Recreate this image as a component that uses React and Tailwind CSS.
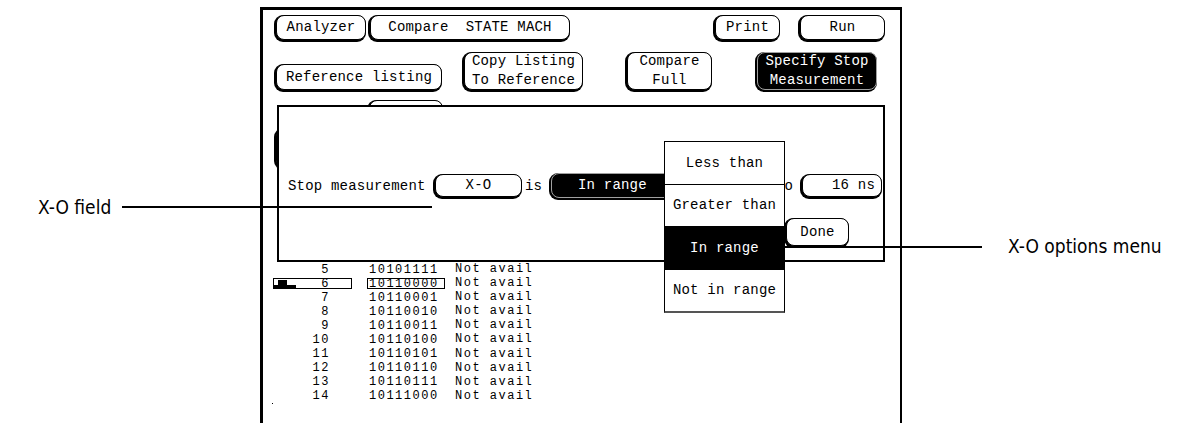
import React from "react";

function Btn({ box, dark, children, inner = "" }) {
  return (
    <div className={`${box} shrink-0 rounded-[9px] bg-black pl-[2px] pb-[2px]`}>
      <div
        className={`h-full w-full rounded-[8px] border flex flex-col items-center justify-center leading-[19px] ${
          dark ? "bg-black border-[#a0a0a0] text-white" : "bg-white border-black text-black"
        } ${inner}`}
      >
        {children}
      </div>
    </div>
  );
}

const rows = [
  ["5", "10101111"],
  ["6", "10110000"],
  ["7", "10110001"],
  ["8", "10110010"],
  ["9", "10110011"],
  ["10", "10110100"],
  ["11", "10110101"],
  ["12", "10110110"],
  ["13", "10110111"],
  ["14", "10111000"],
];

export default function App() {
  return (
    <div className="relative w-[1186px] h-[423px] overflow-hidden bg-white flex text-black">
      {/* left annotation column */}
      <div
        className="w-[260px] shrink-0 pt-[195px] pl-[38px] text-[19px] leading-[24px]"
        style={{ fontFamily: '"Liberation Sans Narrow", "DejaVu Sans Condensed", "Liberation Sans", sans-serif' }}
      >
        X-O field
      </div>

      {/* instrument screen */}
      <div
        className="w-[642px] h-[440px] shrink-0 mt-[7px] border-l-[3px] border-t-[3px] border-r-[2px] border-black flex flex-col text-[14px] tracking-[0.2px]"
        style={{ fontFamily: '"Liberation Mono", "DejaVu Sans Mono", monospace' }}
      >
        {/* row 1 */}
        <div className="flex mt-[5px] h-[27px]">
          <Btn box="ml-[11px] w-[92px] h-[27px]">Analyzer</Btn>
          <Btn box="ml-[2px] w-[202px] h-[27px]">
            <span className="whitespace-pre">Compare  STATE MACH</span>
          </Btn>
          <Btn box="ml-[143px] w-[67px] h-[27px]">Print</Btn>
          <Btn box="ml-[18px] w-[87px] h-[27px]">Run</Btn>
        </div>

        {/* row 2 */}
        <div className="flex items-end mt-[10px] h-[40px]">
          <Btn box="ml-[11px] w-[168px] h-[28px]">Reference listing</Btn>
          <Btn box="ml-[20px] w-[121px] h-[40px]">
            <span>Copy Listing</span>
            <span>To Reference</span>
          </Btn>
          <Btn box="ml-[42px] w-[87px] h-[40px]">
            <span>Compare</span>
            <span>Full</span>
          </Btn>
          <Btn box="ml-[43px] w-[122px] h-[40px]" dark>
            <span>Specify Stop</span>
            <span>Measurement</span>
          </Btn>
        </div>

        {/* rows hidden behind the dialog */}
        <div className="flex mt-[8px] h-[27px]">
          <Btn box="ml-[104px] w-[76px] h-[27px]"> </Btn>
        </div>
        <div className="flex mt-[1px] h-[42px]">
          <Btn box="ml-[11px] w-[150px] h-[42px]"> </Btn>
        </div>

        {/* listing */}
        <div className="mt-[92px] flex flex-col text-[12px] tracking-[1.5px]">
          {rows.map(([n, b]) => {
            const hl = n === "6";
            return (
              <div key={n} className="flex h-[14.1px] leading-[14.1px]">
                <div
                  className={`relative ml-[10px] w-[79px] h-[11px] mt-[1.5px] leading-[11px] text-right pr-[21px] ${
                    hl ? "border border-black" : "border border-transparent"
                  }`}
                >
                  {hl && (
                    <svg className="absolute left-[-1px] top-[0px]" width="23" height="9" viewBox="0 0 23 9">
                      <rect x="0" y="6" width="23" height="3" fill="#000" />
                      <rect x="5" y="1" width="9" height="8" fill="#000" />
                    </svg>
                  )}
                  {n}
                </div>
                <div
                  className={`ml-[15px] w-[78px] h-[11px] mt-[1.5px] leading-[11px] pl-[1px] ${
                    hl ? "border border-black" : "border border-transparent"
                  }`}
                >
                  {b}
                </div>
                <div className="ml-[10px]">Not avail</div>
              </div>
            );
          })}
          <div className="ml-[9px] mt-[0px] w-[1px] h-[1px] bg-black" />
        </div>
      </div>

      {/* right annotation column */}
      <div
        className="shrink-0 pt-[234px] pl-[106px] text-[19px] leading-[24px] whitespace-nowrap"
        style={{ fontFamily: '"Liberation Sans Narrow", "DejaVu Sans Condensed", "Liberation Sans", sans-serif' }}
      >
        X-O options menu
      </div>

      {/* dialog overlay */}
      <div
        className="absolute left-[277px] top-[105px] w-[608px] h-[157px] border-2 border-black bg-white flex flex-col text-[14px] tracking-[0.2px]"
        style={{ fontFamily: '"Liberation Mono", "DejaVu Sans Mono", monospace' }}
      >
        <div className="flex items-center mt-[66px] h-[27px]">
          <span className="ml-[9px] w-[145px]">Stop measurement</span>
          <Btn box="w-[89px] h-[25px]">X-O</Btn>
          <span className="w-[27px] pl-[3px]">is</span>
          <Btn box="w-[125px] h-[27px]" dark inner="items-start pl-[26px]">
            In range
          </Btn>
          <span className="ml-[102px] w-[24px]">to</span>
          <Btn box="w-[82px] h-[25px]" inner="items-end pr-[6px]">
            16 ns
          </Btn>
        </div>
        <div className="flex mt-[18px]">
          <Btn box="ml-[505px] w-[65px] h-[30px]">Done</Btn>
        </div>
      </div>

      {/* options menu overlay */}
      <div
        className="absolute left-[664px] top-[141px] w-[121px] h-[172px] bg-white border border-black border-b-2 border-b-[#555] flex flex-col text-[14px] tracking-[0.2px]"
        style={{ fontFamily: '"Liberation Mono", "DejaVu Sans Mono", monospace' }}
      >
        <div className="h-[43px] flex items-center justify-center border-b border-black">Less than</div>
        <div className="h-[42px] flex items-center justify-center border-b border-black">Greater than</div>
        <div className="h-[43px] flex items-center justify-center bg-black text-white">In range</div>
        <div className="flex-1 flex items-center justify-center">Not in range</div>
      </div>

      {/* callout lines */}
      <div className="absolute left-[122px] top-[206px] w-[310px] h-[2px] bg-black" />
      <div className="absolute left-[785px] top-[246px] w-[197px] h-[2px] bg-black" />
    </div>
  );
}
